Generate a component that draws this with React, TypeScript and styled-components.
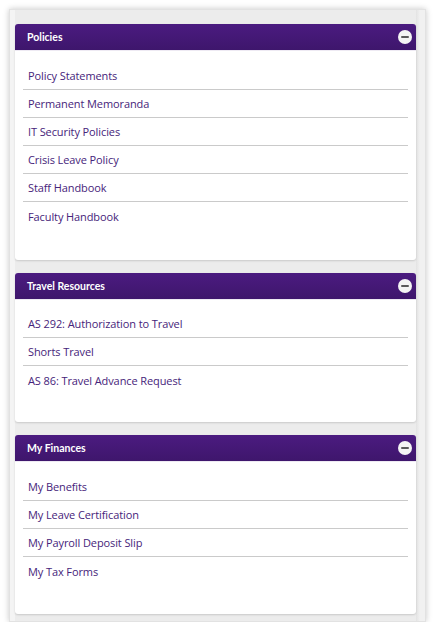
import React from "react";
import styled, { createGlobalStyle } from "styled-components";

const Global = createGlobalStyle`
  html, body { margin: 0; padding: 0; background: #ffffff; }
  body { font-family: "Open Sans", "Noto Sans", "DejaVu Sans", sans-serif; }
`;

const Frame = styled.div`
  margin: 9px 8px 0 9px;
  width: 417px;
  box-sizing: border-box;
  padding: 14px 9px 7px 5px;
  background: linear-gradient(to right, #f4f4f4 0, #f4f4f4 5px, #ececec 5px, #ececec 406px, #e3e3e3 406px, #f1f1f1 410px);
  border: 1px solid #e2e2e2;
  box-shadow: 0 0 6px rgba(0, 0, 0, 0.22);
  display: flex;
  flex-direction: column;
  gap: 13px;
`;

const Panel = styled.section`
  background: #ffffff;
  border-radius: 3px;
  box-shadow: 0 1px 2px rgba(0, 0, 0, 0.15);
  overflow: hidden;
`;

const Header = styled.div`
  height: 27px;
  background: linear-gradient(to bottom, #4b1b80 0%, #3e166c 100%);
  display: flex;
  align-items: center;
  justify-content: space-between;
  padding: 0 4px 0 12px;
  border-bottom: 1px solid #eeeaf3;
  box-sizing: border-box;
`;

const Title = styled.h2`
  margin: 0;
  color: #ffffff;
  font-family: Lato, "Open Sans", sans-serif;
  font-size: 10.5px;
  font-weight: 700;
  letter-spacing: 0;
`;

const Toggle = styled.button`
  width: 14px;
  height: 14px;
  border-radius: 50%;
  border: none;
  padding: 0;
  background: #f4f4f4;
  display: flex;
  align-items: center;
  justify-content: center;
  cursor: pointer;
  &::after {
    content: "";
    width: 8px;
    height: 2.5px;
    background: #5a5a5a;
    border-radius: 1px;
  }
`;

const List = styled.ul<{ $top: number; $bottom: number }>`
  list-style: none;
  margin: 0;
  padding: ${(p) => p.$top}px 8px ${(p) => p.$bottom}px 8px;
`;

const Item = styled.li`
  height: 28px;
  display: flex;
  align-items: center;
  padding-left: 5px;
  border-bottom: 1px solid #cacaca;
  box-sizing: border-box;
  &:last-child { border-bottom: none; }
`;

const Link = styled.a`
  color: #46247a;
  font-size: 11px;
  text-decoration: none;
  letter-spacing: -0.1px;
`;

const panels = [
  {
    title: "Policies",
    top: 11,
    bottom: 30,
    links: [
      "Policy Statements",
      "Permanent Memoranda",
      "IT Security Policies",
      "Crisis Leave Policy",
      "Staff Handbook",
      "Faculty Handbook",
    ],
  },
  {
    title: "Travel Resources",
    top: 10,
    bottom: 28,
    links: ["AS 292: Authorization to Travel", "Shorts Travel", "AS 86: Travel Advance Request"],
  },
  {
    title: "My Finances",
    top: 11,
    bottom: 29,
    links: ["My Benefits", "My Leave Certification", "My Payroll Deposit Slip", "My Tax Forms"],
  },
];

export default function App() {
  return (
    <>
      <Global />
      <Frame>
        {panels.map((p) => (
          <Panel key={p.title}>
            <Header>
              <Title>{p.title}</Title>
              <Toggle aria-label="Collapse" />
            </Header>
            <List $top={p.top} $bottom={p.bottom}>
              {p.links.map((l) => (
                <Item key={l}>
                  <Link href="#">{l}</Link>
                </Item>
              ))}
            </List>
          </Panel>
        ))}
      </Frame>
    </>
  );
}
